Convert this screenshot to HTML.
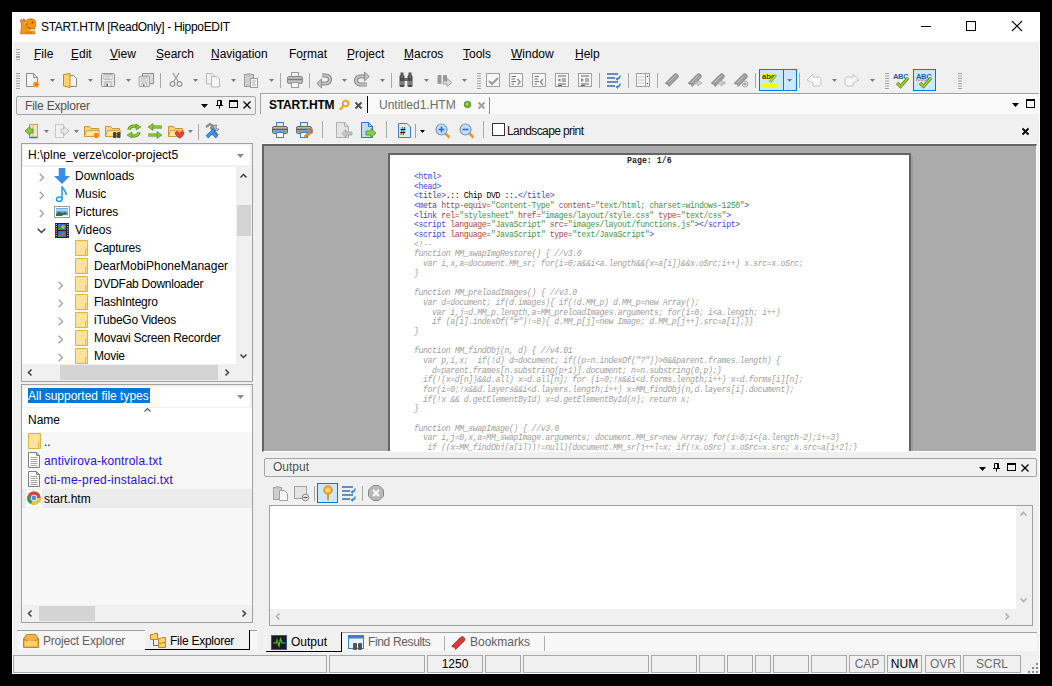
<!DOCTYPE html>
<html><head><meta charset="utf-8">
<style>
*{margin:0;padding:0;box-sizing:border-box}
html,body{width:1052px;height:686px;overflow:hidden;background:#000}
body{position:relative;font-family:"Liberation Sans",sans-serif;font-size:12px;color:#000}
.a{position:absolute}
svg{position:absolute;overflow:visible}
.t{position:absolute;white-space:nowrap;line-height:14px}
#win{left:12px;top:12px;width:1028px;height:662px;background:#f0f0f0}
#title{left:12px;top:12px;width:1028px;height:30px;background:#fff}
.bx{position:absolute;border:1px solid #a0a0a0}
.u{position:absolute;height:1px;background:#000}
.grip{position:absolute;width:4px;height:16px;background:repeating-linear-gradient(#a8a8a8 0 1px,transparent 1px 2.5px)}
.dd{position:absolute;width:0;height:0;border-left:3px solid transparent;border-right:3px solid transparent;border-top:3px solid #7a7a7a}
.sep{position:absolute;width:1px;height:15px;background:#a0a0a0}
.pre{position:absolute;font-family:"Liberation Mono",monospace;font-size:8.2px;letter-spacing:-0.39px;line-height:9.68px;white-space:pre;color:#000}
</style></head><body>
<div class="a" id="win"></div>
<div class="a" id="title"></div>
<!-- hippo icon -->
<svg style="left:20px;top:18px" width="16" height="16" viewBox="0 0 16 16">
<path d="M0.5 15.8 L1.5 8 L1 4.5 L0.3 2 L1.5 1.3 L2.5 3.3 L3.3 0.8 L4.6 1.3 L4.5 3.8 L6 2.5 C8 0.5 12 0.3 14.5 1.8 C16.2 3.3 16 7 15 9.5 C14.4 11 13.8 12 14.2 13.5 L15.2 15.8 Z" fill="#f7950f" stroke="#a8561a" stroke-width="0.6"/>
<path d="M6.5 8.5 C8.5 10.5 11.5 11.5 14.3 11" fill="none" stroke="#8a4a10" stroke-width="0.9"/>
<path d="M10 11.3 L14 11.2 L13.8 12.8 L10.5 12.6Z" fill="#fff"/>
<circle cx="5.9" cy="5.6" r="1.1" fill="#fff"/><circle cx="6.5" cy="6" r="0.7" fill="#000"/>
<ellipse cx="12.3" cy="4.5" rx="0.6" ry="0.9" fill="#5a1a00"/>
<path d="M5 14.3 C7 15.3 10 15.3 12 14.3" fill="none" stroke="#c86a10" stroke-width="0.7"/>
</svg>
<div class="t" style="left:41px;top:20px;font-size:12px;letter-spacing:-0.32px">START.HTM [ReadOnly] - HippoEDIT</div>
<!-- window controls -->
<div class="a" style="left:921px;top:26px;width:10px;height:1px;background:#000"></div>
<div class="a" style="left:966px;top:21px;width:10px;height:10px;border:1px solid #000"></div>
<svg style="left:1012px;top:21px" width="10" height="10" viewBox="0 0 10 10"><path d="M0 0L10 10M10 0L0 10" stroke="#000" stroke-width="1.1"/></svg>

<!-- menu -->
<div class="grip" style="left:16px;top:49px;height:12px"></div>
<div class="t" style="left:34px;top:47px">File</div><div class="u" style="left:34px;top:59px;width:6px"></div>
<div class="t" style="left:71px;top:47px">Edit</div><div class="u" style="left:71px;top:59px;width:7px"></div>
<div class="t" style="left:110px;top:47px">View</div><div class="u" style="left:110px;top:59px;width:8px"></div>
<div class="t" style="left:156px;top:47px">Search</div><div class="u" style="left:156px;top:59px;width:7px"></div>
<div class="t" style="left:211px;top:47px">Navigation</div><div class="u" style="left:211px;top:59px;width:8px"></div>
<div class="t" style="left:289px;top:47px">Format</div><div class="u" style="left:302px;top:59px;width:4px"></div>
<div class="t" style="left:347px;top:47px">Project</div><div class="u" style="left:347px;top:59px;width:7px"></div>
<div class="t" style="left:404px;top:47px">Macros</div><div class="u" style="left:404px;top:59px;width:9px"></div>
<div class="t" style="left:463px;top:47px">Tools</div><div class="u" style="left:463px;top:59px;width:6px"></div>
<div class="t" style="left:511px;top:47px">Window</div><div class="u" style="left:511px;top:59px;width:11px"></div>
<div class="t" style="left:575px;top:47px">Help</div><div class="u" style="left:575px;top:59px;width:8px"></div>
<svg style="left:16px;top:73px" width="4" height="16" viewBox="0 0 4 16"><rect x="0" y="0.0" width="4" height="1" fill="#a0a0a0"/><rect x="0" y="2.5" width="4" height="1" fill="#a0a0a0"/><rect x="0" y="5.0" width="4" height="1" fill="#a0a0a0"/><rect x="0" y="7.5" width="4" height="1" fill="#a0a0a0"/><rect x="0" y="10.0" width="4" height="1" fill="#a0a0a0"/><rect x="0" y="12.5" width="4" height="1" fill="#a0a0a0"/><rect x="0" y="15.0" width="4" height="1" fill="#a0a0a0"/></svg>
<svg style="left:24px;top:72px" width="16" height="16" viewBox="0 0 16 16"><path d="M2.5 1.5H9.5L13.5 5.5V14.5H2.5Z" fill="#f4f4f4" stroke="#8a8a8a"/><path d="M9.5 1.5V5.5H13.5" fill="none" stroke="#8a8a8a"/><circle cx="12" cy="12.5" r="3" fill="#f7a21b"/><circle cx="12.5" cy="12.5" r="1.3" fill="#e8581a"/></svg>
<svg style="left:50px;top:79px" width="5" height="3" viewBox="0 0 5 3"><path d="M0 0H5L2.5 3Z" fill="#7a7a7a"/></svg>
<svg style="left:62px;top:72px" width="16" height="16" viewBox="0 0 16 16"><path d="M7.5 3.5H11.5L14.5 6.5V14.5H7.5Z" fill="#f6f6f6" stroke="#8a8a8a"/><path d="M1.5 2.5L8 1.5V15.5L1.5 14Z" fill="#fdd26a" stroke="#d0861c"/></svg>
<svg style="left:88px;top:79px" width="5" height="3" viewBox="0 0 5 3"><path d="M0 0H5L2.5 3Z" fill="#7a7a7a"/></svg>
<svg style="left:100px;top:72px" width="16" height="16" viewBox="0 0 16 16"><rect x="1.5" y="1.5" width="13" height="13" rx="1" fill="#e8e8e8" stroke="#8f8f8f"/><rect x="4" y="2.5" width="8" height="5" fill="#fafafa" stroke="#9a9a9a" stroke-width="0.6"/><path d="M5 4H11M5 6H10" stroke="#8a8a8a" stroke-width="0.7"/><rect x="5" y="10" width="6" height="4.5" fill="#f8f8f8" stroke="#8a8a8a" stroke-width="0.7"/><rect x="6.5" y="11.5" width="1.5" height="2.5" fill="#555"/></svg>
<svg style="left:126px;top:79px" width="5" height="3" viewBox="0 0 5 3"><path d="M0 0H5L2.5 3Z" fill="#7a7a7a"/></svg>
<svg style="left:138px;top:72px" width="16" height="16" viewBox="0 0 16 16"><rect x="4.5" y="1.5" width="11" height="10" fill="#dcdcdc" stroke="#8f8f8f"/><g transform="translate(0,3) scale(0.8)"><rect x="1.5" y="1.5" width="13" height="13" rx="1" fill="#e8e8e8" stroke="#8f8f8f"/><rect x="4" y="2.5" width="8" height="5" fill="#fafafa" stroke="#9a9a9a" stroke-width="0.6"/><path d="M5 4H11M5 6H10" stroke="#8a8a8a" stroke-width="0.7"/><rect x="5" y="10" width="6" height="4.5" fill="#f8f8f8" stroke="#8a8a8a" stroke-width="0.7"/><rect x="6.5" y="11.5" width="1.5" height="2.5" fill="#555"/></g></svg>
<div class="a" style="left:160px;top:73px;width:1px;height:15px;background:#a9a9a9"></div>
<svg style="left:168px;top:72px" width="16" height="16" viewBox="0 0 16 16"><path d="M5 1L10.5 10M11 1L5.5 10" stroke="#9a9a9a" stroke-width="1.2"/><circle cx="4.5" cy="12" r="2.3" fill="none" stroke="#9a9a9a" stroke-width="1.3"/><circle cx="11.5" cy="12" r="2.3" fill="none" stroke="#9a9a9a" stroke-width="1.3"/></svg>
<svg style="left:193px;top:79px" width="5" height="3" viewBox="0 0 5 3"><path d="M0 0H5L2.5 3Z" fill="#7a7a7a"/></svg>
<svg style="left:205px;top:72px" width="16" height="16" viewBox="0 0 16 16"><path d="M1.5 1.5H7L9.5 4V12H1.5Z" fill="#f2f2f2" stroke="#b8b8b8"/><path d="M6.5 4.5H12L14.5 7V15H6.5Z" fill="#f6f6f6" stroke="#b8b8b8"/></svg>
<svg style="left:231px;top:79px" width="5" height="3" viewBox="0 0 5 3"><path d="M0 0H5L2.5 3Z" fill="#7a7a7a"/></svg>
<svg style="left:243px;top:72px" width="16" height="16" viewBox="0 0 16 16"><rect x="1.5" y="2.5" width="9" height="12" fill="#cfcfcf" stroke="#9a9a9a"/><rect x="4" y="1" width="4" height="3" fill="#bbb"/><rect x="7.5" y="6.5" width="7" height="9" fill="#f8f8f8" stroke="#9a9a9a"/><path d="M9 9H13M9 11H12M9 13H13" stroke="#999" stroke-width="0.8"/></svg>
<svg style="left:269px;top:79px" width="5" height="3" viewBox="0 0 5 3"><path d="M0 0H5L2.5 3Z" fill="#7a7a7a"/></svg>
<div class="a" style="left:280px;top:73px;width:1px;height:15px;background:#a9a9a9"></div>
<svg style="left:287px;top:72px" width="16" height="16" viewBox="0 0 16 16"><rect x="4.5" y="0.5" width="7" height="6" fill="#f0f0f0" stroke="#9a9a9a"/><rect x="0.5" y="4.5" width="15" height="7" rx="1.5" fill="#c0c0c0" stroke="#8a8a8a"/><path d="M1 7.5H15" stroke="#7a7a7a" stroke-width="1.4"/><rect x="4.5" y="10.5" width="7" height="5" fill="#f8f8f8" stroke="#9a9a9a"/></svg>
<div class="a" style="left:309px;top:73px;width:1px;height:15px;background:#a9a9a9"></div>
<svg style="left:316px;top:72px" width="16" height="16" viewBox="0 0 16 16"><path d="M6 3.5H10A4 4 0 0 1 10 11.5H5" fill="none" stroke="#858585" stroke-width="4.2"/><path d="M6 3.5H10A4 4 0 0 1 10 11.5H5" fill="none" stroke="#c4c4c4" stroke-width="2.2"/><path d="M0.8 11.5L5.5 7V16Z" fill="#c4c4c4" stroke="#858585" stroke-width="0.9"/></svg>
<svg style="left:342px;top:79px" width="5" height="3" viewBox="0 0 5 3"><path d="M0 0H5L2.5 3Z" fill="#7a7a7a"/></svg>
<svg style="left:354px;top:72px" width="16" height="16" viewBox="0 0 16 16"><path d="M10 4.5H6A4 4 0 0 0 6 12.5H13" fill="none" stroke="#858585" stroke-width="4.2"/><path d="M10 4.5H6A4 4 0 0 0 6 12.5H13" fill="none" stroke="#c4c4c4" stroke-width="2.2"/><path d="M15.2 4.5L10.5 0V9Z" fill="#c4c4c4" stroke="#858585" stroke-width="0.9"/></svg>
<svg style="left:380px;top:79px" width="5" height="3" viewBox="0 0 5 3"><path d="M0 0H5L2.5 3Z" fill="#7a7a7a"/></svg>
<div class="a" style="left:391px;top:73px;width:1px;height:15px;background:#a9a9a9"></div>
<svg style="left:398px;top:72px" width="16" height="16" viewBox="0 0 16 16"><rect x="1.5" y="3" width="5" height="12" rx="1.5" fill="#4a4a4a"/><rect x="9.5" y="3" width="5" height="12" rx="1.5" fill="#4a4a4a"/><rect x="2.5" y="0.5" width="3" height="3" fill="#555"/><rect x="10.5" y="0.5" width="3" height="3" fill="#555"/><rect x="6" y="6" width="4" height="3" fill="#666"/><path d="M2 10H6M10 10H14M2 12H6M10 12H14" stroke="#ccc" stroke-width="0.8"/><circle cx="4" cy="5" r="0.8" fill="#6ab0ff"/><circle cx="12" cy="5" r="0.8" fill="#6ab0ff"/></svg>
<svg style="left:424px;top:79px" width="5" height="3" viewBox="0 0 5 3"><path d="M0 0H5L2.5 3Z" fill="#7a7a7a"/></svg>
<svg style="left:437px;top:72px" width="16" height="16" viewBox="0 0 16 16"><rect x="0.5" y="3" width="4" height="9" rx="1" fill="#999"/><rect x="6" y="3" width="4" height="9" rx="1" fill="#999"/><path d="M6 9H10V6.5L15 10.5L10 14.5V12H6Z" fill="#d8d8d8" stroke="#9a9a9a" stroke-width="0.8"/></svg>
<svg style="left:462px;top:79px" width="5" height="3" viewBox="0 0 5 3"><path d="M0 0H5L2.5 3Z" fill="#7a7a7a"/></svg>
<svg style="left:477px;top:73px" width="4" height="16" viewBox="0 0 4 16"><rect x="0" y="0.0" width="4" height="1" fill="#a0a0a0"/><rect x="0" y="2.5" width="4" height="1" fill="#a0a0a0"/><rect x="0" y="5.0" width="4" height="1" fill="#a0a0a0"/><rect x="0" y="7.5" width="4" height="1" fill="#a0a0a0"/><rect x="0" y="10.0" width="4" height="1" fill="#a0a0a0"/><rect x="0" y="12.5" width="4" height="1" fill="#a0a0a0"/><rect x="0" y="15.0" width="4" height="1" fill="#a0a0a0"/></svg>
<svg style="left:485px;top:72px" width="16" height="16" viewBox="0 0 16 16"><rect x="1.5" y="1.5" width="13" height="13" fill="#f6f6f6" stroke="#a0a0a0"/><path d="M4 9L7 12L13 6" fill="none" stroke="#9a9a9a" stroke-width="2"/></svg>
<svg style="left:508px;top:72px" width="16" height="16" viewBox="0 0 16 16"><rect x="1.5" y="1.5" width="13" height="13" fill="#f6f6f6" stroke="#a0a0a0"/><path d="M3.5 4.5H8M3.5 7H7M3.5 9.5H8M3.5 12H6" stroke="#666" stroke-width="0.9"/><path d="M9.5 7L12 10L9.5 13" fill="none" stroke="#9a9a9a" stroke-width="1.6"/></svg>
<svg style="left:531px;top:72px" width="16" height="16" viewBox="0 0 16 16"><rect x="1.5" y="1.5" width="13" height="13" fill="#f6f6f6" stroke="#a0a0a0"/><path d="M3.5 4.5H8M3.5 7H7M3.5 9.5H8M3.5 12H6" stroke="#666" stroke-width="0.9"/><path d="M12 7L9.5 10L12 13" fill="none" stroke="#9a9a9a" stroke-width="1.6"/></svg>
<svg style="left:554px;top:72px" width="16" height="16" viewBox="0 0 16 16"><rect x="1.5" y="1.5" width="13" height="13" fill="#f6f6f6" stroke="#a0a0a0"/><path d="M4 4H12M8 7H12M8 9H12M4 12H12M4 13.5H8" stroke="#555" stroke-width="0.9"/><path d="M3.5 8L6.5 6V10Z" fill="#888"/></svg>
<svg style="left:577px;top:72px" width="16" height="16" viewBox="0 0 16 16"><rect x="1.5" y="1.5" width="13" height="13" fill="#f6f6f6" stroke="#a0a0a0"/><path d="M4 4H12M8 7H12M8 9H12M4 12H12M4 13.5H8" stroke="#555" stroke-width="0.9"/><path d="M7 8L4 6V10Z" fill="#888"/></svg>
<div class="a" style="left:599px;top:73px;width:1px;height:15px;background:#a9a9a9"></div>
<svg style="left:606px;top:72px" width="16" height="16" viewBox="0 0 16 16"><path d="M1 2H12M1 6H9M1 10H12M1 14H9" stroke="#3a6ea5" stroke-width="1.3"/><path d="M14 3.5C14 6 12.5 7 10.5 7M14 11.5C14 14 12.5 15 10.5 15" fill="none" stroke="#2a8ae0" stroke-width="1.5"/><path d="M9.5 7L12 5V9ZM9.5 15L12 13V17Z" fill="#2a8ae0"/></svg>
<div class="a" style="left:628px;top:73px;width:1px;height:15px;background:#a9a9a9"></div>
<svg style="left:635px;top:72px" width="16" height="16" viewBox="0 0 16 16"><rect x="1.5" y="1.5" width="13" height="13" fill="#f8f8f8" stroke="#a0a0a0"/><path d="M10.5 1.5V14.5" stroke="#a0a0a0"/><path d="M3 5H9M3 8H9M3 11H9" stroke="#c8c8c8"/><path d="M11.5 5L12.5 3.5L13.5 5ZM11.5 11L12.5 12.5L13.5 11Z" fill="#444"/></svg>
<div class="a" style="left:657px;top:73px;width:1px;height:15px;background:#a9a9a9"></div>
<svg style="left:664px;top:72px" width="16" height="16" viewBox="0 0 16 16"><path d="M1.5 11L10 2.5C11 1.5 12.5 1.5 13.5 2.5C14.5 3.5 14.5 5 13.5 6L5 14.5L4.5 12L2 12Z" fill="#9f9f9f" stroke="#7a7a7a" stroke-width="0.8"/><path d="M4 11L11.5 3.5" stroke="#c8c8c8" stroke-width="0.8"/></svg>
<svg style="left:687px;top:72px" width="16" height="16" viewBox="0 0 16 16"><path d="M1.5 11L10 2.5C11 1.5 12.5 1.5 13.5 2.5C14.5 3.5 14.5 5 13.5 6L5 14.5L4.5 12L2 12Z" fill="#9f9f9f" stroke="#7a7a7a" stroke-width="0.8"/><path d="M4 11L11.5 3.5" stroke="#c8c8c8" stroke-width="0.8"/><path d="M8 10H11V8L15 11L11 14V12H8Z" fill="#d0d0d0" stroke="#a0a0a0" stroke-width="0.6"/></svg>
<svg style="left:710px;top:72px" width="16" height="16" viewBox="0 0 16 16"><path d="M1.5 11L10 2.5C11 1.5 12.5 1.5 13.5 2.5C14.5 3.5 14.5 5 13.5 6L5 14.5L4.5 12L2 12Z" fill="#9f9f9f" stroke="#7a7a7a" stroke-width="0.8"/><path d="M4 11L11.5 3.5" stroke="#c8c8c8" stroke-width="0.8"/><path d="M15 10H12V8L8 11L12 14V12H15Z" fill="#d0d0d0" stroke="#a0a0a0" stroke-width="0.6"/></svg>
<svg style="left:733px;top:72px" width="16" height="16" viewBox="0 0 16 16"><path d="M1.5 11L10 2.5C11 1.5 12.5 1.5 13.5 2.5C14.5 3.5 14.5 5 13.5 6L5 14.5L4.5 12L2 12Z" fill="#9f9f9f" stroke="#7a7a7a" stroke-width="0.8"/><path d="M4 11L11.5 3.5" stroke="#c8c8c8" stroke-width="0.8"/><circle cx="12" cy="12" r="3" fill="#d8d8d8" stroke="#999" stroke-width="0.7"/><path d="M10.5 12H13.5" stroke="#777"/></svg>
<div class="a" style="left:755px;top:73px;width:1px;height:15px;background:#a9a9a9"></div>
<div class="a" style="left:759px;top:69px;width:38px;height:22px;background:#cce8ff;border:1px solid #0078d7"></div>
<div class="a" style="left:783px;top:69px;width:1px;height:22px;background:#0078d7"></div>
<svg style="left:762px;top:72px" width="16" height="16" viewBox="0 0 16 16"><rect x="0" y="1" width="11" height="6" fill="#ffff00"/><text x="0" y="7" font-family="Liberation Sans" font-weight="bold" font-size="7.5" fill="#333">abc</text><path d="M8 10L14 3" stroke="#5a8a10" stroke-width="2.6"/><path d="M8 10L14 3" stroke="#b8e040" stroke-width="1.3"/><rect x="0" y="12" width="16" height="4" fill="#ffff00"/></svg>
<svg style="left:787px;top:79px" width="5" height="3" viewBox="0 0 5 3"><path d="M0 0H5L2.5 3Z" fill="#7a7a7a"/></svg>
<div class="a" style="left:799px;top:73px;width:1px;height:15px;background:#a9a9a9"></div>
<svg style="left:806px;top:72px" width="16" height="16" viewBox="0 0 16 16"><path d="M1 8L7 2V5H12C14 5 15 6 15 8V11C15 13 14 14 12 14H7V11Z" fill="#f6f6f6" stroke="#c2c2c2"/></svg>
<svg style="left:832px;top:79px" width="5" height="3" viewBox="0 0 5 3"><path d="M0 0H5L2.5 3Z" fill="#7a7a7a"/></svg>
<svg style="left:844px;top:72px" width="16" height="16" viewBox="0 0 16 16"><path d="M15 8L9 2V5H4C2 5 1 6 1 8V11C1 13 2 14 4 14H9V11Z" fill="#f6f6f6" stroke="#c2c2c2"/></svg>
<svg style="left:870px;top:79px" width="5" height="3" viewBox="0 0 5 3"><path d="M0 0H5L2.5 3Z" fill="#7a7a7a"/></svg>
<svg style="left:885px;top:73px" width="4" height="16" viewBox="0 0 4 16"><rect x="0" y="0.0" width="4" height="1" fill="#a0a0a0"/><rect x="0" y="2.5" width="4" height="1" fill="#a0a0a0"/><rect x="0" y="5.0" width="4" height="1" fill="#a0a0a0"/><rect x="0" y="7.5" width="4" height="1" fill="#a0a0a0"/><rect x="0" y="10.0" width="4" height="1" fill="#a0a0a0"/><rect x="0" y="12.5" width="4" height="1" fill="#a0a0a0"/><rect x="0" y="15.0" width="4" height="1" fill="#a0a0a0"/></svg>
<svg style="left:893px;top:72px" width="16" height="16" viewBox="0 0 16 16"><text x="0" y="7" font-family="Liberation Sans" font-weight="bold" font-size="7.5" fill="#2060a8" letter-spacing="-0.3">ABC</text><path d="M4 11L7.5 14.5L15 6" fill="none" stroke="#5a8a10" stroke-width="3.2"/><path d="M4 11L7.5 14.5L15 6" fill="none" stroke="#9ed02a" stroke-width="1.8"/></svg>
<div class="a" style="left:913px;top:69px;width:23px;height:22px;background:#cce8ff;border:1px solid #0078d7"></div>
<svg style="left:916px;top:72px" width="16" height="16" viewBox="0 0 16 16"><text x="0" y="7" font-family="Liberation Sans" font-weight="bold" font-size="7.5" fill="#2060a8" letter-spacing="-0.3">ABC</text><path d="M0 8.5L1.5 7.7L3 8.5L4.5 7.7L6 8.5L7.5 7.7L9 8.5L10.5 7.7L12 8.5" fill="none" stroke="#e02020" stroke-width="0.6"/><path d="M4 11L7.5 14.5L15 6" fill="none" stroke="#5a8a10" stroke-width="3.2"/><path d="M4 11L7.5 14.5L15 6" fill="none" stroke="#9ed02a" stroke-width="1.8"/></svg>
<svg style="left:958px;top:73px" width="4" height="16" viewBox="0 0 4 16"><rect x="0" y="0.0" width="4" height="1" fill="#a0a0a0"/><rect x="0" y="2.5" width="4" height="1" fill="#a0a0a0"/><rect x="0" y="5.0" width="4" height="1" fill="#a0a0a0"/><rect x="0" y="7.5" width="4" height="1" fill="#a0a0a0"/><rect x="0" y="10.0" width="4" height="1" fill="#a0a0a0"/><rect x="0" y="12.5" width="4" height="1" fill="#a0a0a0"/><rect x="0" y="15.0" width="4" height="1" fill="#a0a0a0"/></svg>
<div class="a" style="left:16px;top:96px;width:240px;height:19px;border:1px solid #a5a5a5;border-radius:2px"></div>
<div class="t" style="left:25px;top:99px;color:#505050;letter-spacing:-0.2px">File Explorer</div>
<svg style="left:201px;top:104px" width="7" height="4" viewBox="0 0 7 4"><path d="M0 0H7L3.5 4Z" fill="#000"/></svg>
<svg style="left:215px;top:100px" width="9" height="9" viewBox="0 0 9 9"><path d="M2.5 0.5H6.5V5.5H2.5Z" fill="none" stroke="#000"/><path d="M1 5.5H8M4.5 5.5V8.5M5.5 0.5V5" stroke="#000"/></svg>
<div class="a" style="left:229px;top:100px;width:9px;height:8px;border:1px solid #000;border-top-width:2px"></div>
<svg style="left:243px;top:101px" width="8" height="8" viewBox="0 0 8 8"><path d="M0.5 0.5L7.5 7.5M7.5 0.5L0.5 7.5" stroke="#000" stroke-width="1.3"/></svg>
<svg style="left:24px;top:123px" width="16" height="16" viewBox="0 0 16 16"><rect x="5.5" y="1.5" width="8" height="13" fill="#f2e3c4" stroke="#c8a060"/><path d="M9 1.5V14.5" stroke="#d8b880"/><path d="M5.5 14.5H13.5" stroke="#2a7ad0" stroke-width="1.5"/><path d="M1 8L6 3.5V6H9V10H6V12.5Z" fill="#8cc63f" stroke="#4a8a10" stroke-width="0.7"/></svg>
<svg style="left:44px;top:130px" width="5" height="3" viewBox="0 0 5 3"><path d="M0 0H5L2.5 3Z" fill="#7a7a7a"/></svg>
<svg style="left:54px;top:123px" width="16" height="16" viewBox="0 0 16 16"><rect x="1.5" y="1.5" width="8" height="13" fill="#f2f2f2" stroke="#c8c8c8"/><path d="M15 8L10 3.5V6H7V10H10V12.5Z" fill="#e8e8e8" stroke="#b0b0b0" stroke-width="0.7"/></svg>
<svg style="left:74px;top:130px" width="5" height="3" viewBox="0 0 5 3"><path d="M0 0H5L2.5 3Z" fill="#7a7a7a"/></svg>
<svg style="left:84px;top:123px" width="16" height="16" viewBox="0 0 16 16"><path d="M0.5 3.5V13.5H14.5V5.5H7L5.5 3.5Z" fill="#f6d77c" stroke="#d39030"/><path d="M0.5 13.5L2.5 7.5H15.5L14.5 13.5Z" fill="#fbe6a0" stroke="#d39030" stroke-width="0.8"/><circle cx="12.5" cy="12.5" r="2.8" fill="#f58a1f"/></svg>
<svg style="left:105px;top:123px" width="16" height="16" viewBox="0 0 16 16"><path d="M0.5 3.5V13.5H14.5V5.5H7L5.5 3.5Z" fill="#f6d77c" stroke="#d39030"/><path d="M0.5 13.5L2.5 7.5H15.5L14.5 13.5Z" fill="#fbe6a0" stroke="#d39030" stroke-width="0.8"/><rect x="8" y="9" width="3.5" height="6" rx="1" fill="#444"/><rect x="12" y="9" width="3.5" height="6" rx="1" fill="#444"/></svg>
<svg style="left:126px;top:123px" width="16" height="16" viewBox="0 0 16 16"><path d="M3 7C3 3 9 2 12 4" fill="none" stroke="#4a8a10" stroke-width="3"/><path d="M3 7C3 3 9 2 12 4" fill="none" stroke="#9ed02a" stroke-width="1.6"/><path d="M10 1L15 4L10 7Z" fill="#8cc63f" stroke="#4a8a10" stroke-width="0.6"/><path d="M13 9C13 13 7 14 4 12" fill="none" stroke="#4a8a10" stroke-width="3"/><path d="M13 9C13 13 7 14 4 12" fill="none" stroke="#9ed02a" stroke-width="1.6"/><path d="M6 9L1 12L6 15Z" fill="#8cc63f" stroke="#4a8a10" stroke-width="0.6"/></svg>
<svg style="left:147px;top:123px" width="16" height="16" viewBox="0 0 16 16"><path d="M5 4H15" stroke="#4a8a10" stroke-width="3"/><path d="M5 4H15" stroke="#9ed02a" stroke-width="1.6"/><path d="M6 0.5L1 4L6 7.5Z" fill="#8cc63f" stroke="#4a8a10" stroke-width="0.6"/><path d="M1 12H11" stroke="#4a8a10" stroke-width="3"/><path d="M1 12H11" stroke="#9ed02a" stroke-width="1.6"/><path d="M10 8.5L15 12L10 15.5Z" fill="#8cc63f" stroke="#4a8a10" stroke-width="0.6"/></svg>
<svg style="left:168px;top:123px" width="16" height="16" viewBox="0 0 16 16"><path d="M0.5 3.5V13.5H14.5V5.5H7L5.5 3.5Z" fill="#f6d77c" stroke="#d39030"/><path d="M0.5 13.5L2.5 7.5H15.5L14.5 13.5Z" fill="#fbe6a0" stroke="#d39030" stroke-width="0.8"/><path d="M11.5 15.5L7.5 11.5C6.5 10.5 7 8.5 9 8.5C10.2 8.5 11 9.3 11.5 10C12 9.3 12.8 8.5 14 8.5C16 8.5 16.5 10.5 15.5 11.5Z" fill="#e8403a" stroke="#b02020" stroke-width="0.6"/></svg>
<svg style="left:188px;top:130px" width="5" height="3" viewBox="0 0 5 3"><path d="M0 0H5L2.5 3Z" fill="#7a7a7a"/></svg>
<div class="a" style="left:198px;top:124px;width:1px;height:16px;background:#a9a9a9"></div>
<svg style="left:204px;top:123px" width="16" height="16" viewBox="0 0 16 16"><path d="M2 4L6 1L9 3L7 5L14 12" fill="none" stroke="#8a8a8a" stroke-width="2.2"/><path d="M13 2A3 3 0 1 0 15 6L13 6L12 4Z" fill="#c8c8c8" stroke="#7a7a7a" stroke-width="0.8"/><path d="M3 14L11 6" stroke="#1a5fb4" stroke-width="3.4"/><path d="M3 14L11 6" stroke="#4a9af0" stroke-width="2"/><path d="M13 14L9 10" stroke="#1a5fb4" stroke-width="3.4"/><path d="M13 14L9 10" stroke="#4a9af0" stroke-width="2"/></svg>
<div class="a" style="left:21px;top:143px;width:232px;height:239px;border:1px solid #a0a0a0;background:#fff"></div>
<div class="a" style="left:22px;top:144px;width:230px;height:23px;background:#f0f0f0"></div>
<div class="a" style="left:23px;top:145px;width:227px;height:20px;background:#fff"></div>
<div class="t" style="left:28px;top:148px;">H:\plne_verze\color-project5</div>
<svg style="left:237px;top:154px" width="7" height="4" viewBox="0 0 7 4"><path d="M0 0H7L3.5 4Z" fill="#8a8a8a"/></svg>
<div class="a" style="left:236px;top:167px;width:16px;height:214px;background:#f0f0f0"></div>
<div class="a" style="left:22px;top:364px;width:214px;height:17px;background:#f0f0f0"></div>
<div class="a" style="left:237px;top:205px;width:14px;height:31px;background:#d4d4d4"></div>
<div class="a" style="left:60px;top:365px;width:158px;height:15px;background:#d4d4d4"></div>
<svg style="left:240px;top:174px" width="7" height="4" viewBox="0 0 7 4"><path d="M0.5 3.5L3.5 0.5L6.5 3.5" fill="none" stroke="#404040" stroke-width="1.5"/></svg>
<svg style="left:240px;top:354px" width="7" height="4" viewBox="0 0 7 4"><path d="M0.5 0.5L3.5 3.5L6.5 0.5" fill="none" stroke="#404040" stroke-width="1.5"/></svg>
<svg style="left:28px;top:369px" width="4" height="7" viewBox="0 0 4 7"><path d="M3.5 0.5L0.5 3.5L3.5 6.5" fill="none" stroke="#404040" stroke-width="1.5"/></svg>
<svg style="left:225px;top:369px" width="4" height="7" viewBox="0 0 4 7"><path d="M0.5 0.5L3.5 3.5L0.5 6.5" fill="none" stroke="#404040" stroke-width="1.5"/></svg>
<svg style="left:39px;top:173px" width="6" height="9" viewBox="0 0 6 9"><path d="M0.7 0.7L4.5 4.5L0.7 8.3" fill="none" stroke="#a0a0a0" stroke-width="1.3"/></svg>
<svg style="left:54px;top:168px" width="16" height="16" viewBox="0 0 16 16"><path d="M4.7 0H11.3V8H16L8 16L0 8H4.7Z" fill="#3a8ee6"/></svg>
<div class="t" style="left:75px;top:169px;">Downloads</div>
<svg style="left:39px;top:191px" width="6" height="9" viewBox="0 0 6 9"><path d="M0.7 0.7L4.5 4.5L0.7 8.3" fill="none" stroke="#a0a0a0" stroke-width="1.3"/></svg>
<svg style="left:56px;top:186px" width="12" height="16" viewBox="0 0 12 16"><path d="M6 0.5V13" stroke="#1a9af0" stroke-width="1.5"/><ellipse cx="3.3" cy="13.2" rx="2.8" ry="2.2" fill="none" stroke="#1a9af0" stroke-width="1.5"/><path d="M6 0.5C6.5 3 10.5 4.5 10.2 9" fill="none" stroke="#1a9af0" stroke-width="1.5"/></svg>
<div class="t" style="left:75px;top:187px;">Music</div>
<svg style="left:39px;top:209px" width="6" height="9" viewBox="0 0 6 9"><path d="M0.7 0.7L4.5 4.5L0.7 8.3" fill="none" stroke="#a0a0a0" stroke-width="1.3"/></svg>
<svg style="left:54px;top:206px" width="16" height="12" viewBox="0 0 16 12"><rect x="0.5" y="0.5" width="15" height="11" fill="#fff" stroke="#9a9a9a"/><rect x="2" y="2" width="12" height="8" fill="#6ab0e8"/><path d="M2 3H14V5H2Z" fill="#a8d4f4"/><path d="M2 8L5 5.5L8 7L11 6L14 8V10H2Z" fill="#3a6a48"/><path d="M9 9L14 8.5V10H8Z" fill="#dfe8f0"/></svg>
<div class="t" style="left:75px;top:205px;">Pictures</div>
<svg style="left:37px;top:228px" width="9" height="6" viewBox="0 0 9 6"><path d="M0.7 0.7L4.5 4.5L8.3 0.7" fill="none" stroke="#404040" stroke-width="1.4"/></svg>
<svg style="left:55px;top:223px" width="14" height="15" viewBox="0 0 14 15"><rect x="0" y="0" width="14" height="15" fill="#222"/><rect x="3" y="1" width="8" height="6" fill="#3a70c8"/><rect x="3" y="8" width="8" height="6" fill="#3a70c8"/><circle cx="8" cy="4" r="1.8" fill="#e8b020"/><rect x="3" y="5" width="3" height="2" fill="#40a040"/><circle cx="8" cy="11" r="1.8" fill="#e05a20"/><rect x="3" y="12" width="3" height="2" fill="#40a040"/><path d="M1.2 1V14.5M12.8 1V14.5" stroke="#eee" stroke-width="1" stroke-dasharray="1 1.2"/></svg>
<div class="t" style="left:75px;top:223px;">Videos</div>
<svg style="left:75px;top:240px" width="13" height="16" viewBox="0 0 13 16"><path d="M0.5 0.5H12.5V15.5H0.5Z" fill="#fce29a" stroke="#e0b440"/><path d="M10.5 9.5V15.5H12.5V8.5Z" fill="#fcd77a" stroke="#e0b440" stroke-width="0.8"/></svg>
<div class="t" style="left:94px;top:241px;letter-spacing:-0.25px">Captures</div>
<svg style="left:75px;top:258px" width="13" height="16" viewBox="0 0 13 16"><path d="M0.5 0.5H12.5V15.5H0.5Z" fill="#fce29a" stroke="#e0b440"/><path d="M10.5 9.5V15.5H12.5V8.5Z" fill="#fcd77a" stroke="#e0b440" stroke-width="0.8"/></svg>
<div class="t" style="left:94px;top:259px;">DearMobiPhoneManager</div>
<svg style="left:58px;top:281px" width="6" height="9" viewBox="0 0 6 9"><path d="M0.7 0.7L4.5 4.5L0.7 8.3" fill="none" stroke="#a0a0a0" stroke-width="1.3"/></svg>
<svg style="left:75px;top:276px" width="13" height="16" viewBox="0 0 13 16"><path d="M0.5 0.5H12.5V15.5H0.5Z" fill="#fce29a" stroke="#e0b440"/><path d="M10.5 9.5V15.5H12.5V8.5Z" fill="#fcd77a" stroke="#e0b440" stroke-width="0.8"/></svg>
<div class="t" style="left:94px;top:277px;letter-spacing:-0.25px">DVDFab Downloader</div>
<svg style="left:58px;top:299px" width="6" height="9" viewBox="0 0 6 9"><path d="M0.7 0.7L4.5 4.5L0.7 8.3" fill="none" stroke="#a0a0a0" stroke-width="1.3"/></svg>
<svg style="left:75px;top:294px" width="13" height="16" viewBox="0 0 13 16"><path d="M0.5 0.5H12.5V15.5H0.5Z" fill="#fce29a" stroke="#e0b440"/><path d="M10.5 9.5V15.5H12.5V8.5Z" fill="#fcd77a" stroke="#e0b440" stroke-width="0.8"/></svg>
<div class="t" style="left:94px;top:295px;letter-spacing:-0.25px">FlashIntegro</div>
<svg style="left:58px;top:317px" width="6" height="9" viewBox="0 0 6 9"><path d="M0.7 0.7L4.5 4.5L0.7 8.3" fill="none" stroke="#a0a0a0" stroke-width="1.3"/></svg>
<svg style="left:75px;top:312px" width="13" height="16" viewBox="0 0 13 16"><path d="M0.5 0.5H12.5V15.5H0.5Z" fill="#fce29a" stroke="#e0b440"/><path d="M10.5 9.5V15.5H12.5V8.5Z" fill="#fcd77a" stroke="#e0b440" stroke-width="0.8"/></svg>
<div class="t" style="left:94px;top:313px;letter-spacing:-0.25px">iTubeGo Videos</div>
<svg style="left:58px;top:335px" width="6" height="9" viewBox="0 0 6 9"><path d="M0.7 0.7L4.5 4.5L0.7 8.3" fill="none" stroke="#a0a0a0" stroke-width="1.3"/></svg>
<svg style="left:75px;top:330px" width="13" height="16" viewBox="0 0 13 16"><path d="M0.5 0.5H12.5V15.5H0.5Z" fill="#fce29a" stroke="#e0b440"/><path d="M10.5 9.5V15.5H12.5V8.5Z" fill="#fcd77a" stroke="#e0b440" stroke-width="0.8"/></svg>
<div class="t" style="left:94px;top:331px;letter-spacing:-0.25px">Movavi Screen Recorder</div>
<svg style="left:58px;top:353px" width="6" height="9" viewBox="0 0 6 9"><path d="M0.7 0.7L4.5 4.5L0.7 8.3" fill="none" stroke="#a0a0a0" stroke-width="1.3"/></svg>
<svg style="left:75px;top:348px" width="13" height="16" viewBox="0 0 13 16"><path d="M0.5 0.5H12.5V15.5H0.5Z" fill="#fce29a" stroke="#e0b440"/><path d="M10.5 9.5V15.5H12.5V8.5Z" fill="#fcd77a" stroke="#e0b440" stroke-width="0.8"/></svg>
<div class="t" style="left:94px;top:349px;letter-spacing:-0.25px">Movie</div>
<div class="a" style="left:22px;top:364px;width:214px;height:17px;background:#f0f0f0"></div>
<div class="a" style="left:60px;top:365px;width:158px;height:15px;background:#d4d4d4"></div>
<svg style="left:28px;top:369px" width="4" height="7" viewBox="0 0 4 7"><path d="M3.5 0.5L0.5 3.5L3.5 6.5" fill="none" stroke="#404040" stroke-width="1.5"/></svg>
<svg style="left:225px;top:369px" width="4" height="7" viewBox="0 0 4 7"><path d="M0.5 0.5L3.5 3.5L0.5 6.5" fill="none" stroke="#404040" stroke-width="1.5"/></svg>
<div class="a" style="left:21px;top:384px;width:232px;height:239px;border:1px solid #a0a0a0;background:#f7f7f7"></div>
<div class="a" style="left:22px;top:385px;width:230px;height:23px;background:#f0f0f0"></div>
<div class="a" style="left:23px;top:387px;width:227px;height:20px;background:#fff"></div>
<div class="a" style="left:22px;top:408px;width:230px;height:24px;background:#fff"></div>
<div class="a" style="left:28px;top:388px;width:122px;height:15px;background:#0078d7"></div>
<div class="t" style="left:28px;top:389px;color:#fff">All supported file types</div>
<svg style="left:237px;top:395px" width="7" height="4" viewBox="0 0 7 4"><path d="M0 0H7L3.5 4Z" fill="#8a8a8a"/></svg>
<svg style="left:144px;top:408px" width="7" height="4" viewBox="0 0 7 4"><path d="M0.5 3.5L3.5 0.5L6.5 3.5" fill="none" stroke="#555" stroke-width="1.1"/></svg>
<div class="t" style="left:28px;top:413px;">Name</div>
<div class="a" style="left:22px;top:489px;width:230px;height:19px;background:#ececec"></div>
<div class="a" style="left:26px;top:490px;width:16px;height:17px;background:#fff"></div>
<svg style="left:28px;top:433px" width="13" height="16" viewBox="0 0 13 16"><path d="M0.5 0.5H12.5V15.5H0.5Z" fill="#fce29a" stroke="#e0b440"/><path d="M10.5 9.5V15.5H12.5V8.5Z" fill="#fcd77a" stroke="#e0b440" stroke-width="0.8"/></svg>
<div class="t" style="left:44px;top:435px;">..</div>
<svg style="left:28px;top:452px" width="12" height="16" viewBox="0 0 12 16"><path d="M0.5 0.5H8.5L11.5 3.5V15.5H0.5Z" fill="#fff" stroke="#808080"/><path d="M8.5 0.5V3.5H11.5" fill="none" stroke="#808080"/><path d="M2.5 5.5H9.5M2.5 7.5H9.5M2.5 9.5H9.5M2.5 11.5H9.5M2.5 13.5H9.5" stroke="#909090" stroke-width="0.8"/></svg>
<div class="t" style="left:44px;top:454px;color:#2a10e0;letter-spacing:0.17px">antivirova-kontrola.txt</div>
<svg style="left:28px;top:471px" width="12" height="16" viewBox="0 0 12 16"><path d="M0.5 0.5H8.5L11.5 3.5V15.5H0.5Z" fill="#fff" stroke="#808080"/><path d="M8.5 0.5V3.5H11.5" fill="none" stroke="#808080"/><path d="M2.5 5.5H9.5M2.5 7.5H9.5M2.5 9.5H9.5M2.5 11.5H9.5M2.5 13.5H9.5" stroke="#909090" stroke-width="0.8"/></svg>
<div class="t" style="left:44px;top:473px;color:#2a10e0;letter-spacing:0.2px">cti-me-pred-instalaci.txt</div>
<svg style="left:27px;top:491px" width="14" height="14" viewBox="0 0 14 14"><circle cx="7" cy="7" r="6.8" fill="#db4437"/><path d="M7 7L13.8 7A6.8 6.8 0 0 1 3.6 12.9Z" fill="#e8c53a"/><path d="M7 7L3.6 12.9A6.8 6.8 0 0 1 0.5 5Z" fill="#3a9a5a"/><circle cx="7" cy="7" r="3.2" fill="#fff"/><circle cx="7" cy="7" r="2.4" fill="#4a8af4"/></svg>
<div class="t" style="left:44px;top:492px;">start.htm</div>
<div class="a" style="left:22px;top:605px;width:230px;height:17px;background:#f0f0f0"></div>
<div class="a" style="left:39px;top:606px;width:56px;height:15px;background:#d4d4d4"></div>
<svg style="left:28px;top:610px" width="4" height="7" viewBox="0 0 4 7"><path d="M3.5 0.5L0.5 3.5L3.5 6.5" fill="none" stroke="#404040" stroke-width="1.5"/></svg>
<svg style="left:242px;top:610px" width="4" height="7" viewBox="0 0 4 7"><path d="M0.5 0.5L3.5 3.5L0.5 6.5" fill="none" stroke="#404040" stroke-width="1.5"/></svg>
<div class="a" style="left:17px;top:630px;width:128px;height:1px;background:#a0a0a0"></div>
<div class="a" style="left:250px;top:630px;width:7px;height:1px;background:#a0a0a0"></div>
<div class="a" style="left:17px;top:631px;width:240px;height:19px;background:#f7f7f7"></div>
<div class="a" style="left:145px;top:630px;width:105px;height:20px;background:#f0f0f0;border-right:1px solid #000;border-bottom:1px solid #000"></div>
<svg style="left:23px;top:634px" width="16" height="14" viewBox="0 0 16 14"><path d="M0.5 5L3.5 0.5H12.5L15.5 5V13.5H0.5Z" fill="#f5b040" stroke="#d08020"/><path d="M0.5 5L8 9L15.5 5" fill="none" stroke="#c07010" stroke-width="0.8"/><rect x="2" y="7" width="12" height="5" fill="#fcd36a"/></svg>
<div class="t" style="left:43px;top:634px;color:#606060;letter-spacing:-0.2px">Project Explorer</div>
<svg style="left:150px;top:633px" width="16" height="15" viewBox="0 0 16 15"><path d="M0.5 1.5H3L4 0.5H7.5V6.5H0.5Z" fill="#fbd36a" stroke="#d08020"/><path d="M8.5 5.5H11L12 4.5H15.5V10.5H8.5Z" fill="#fbd36a" stroke="#d08020"/><path d="M8.5 10.5H11L12 9.5H15.5V14.5H8.5Z" fill="#fbd36a" stroke="#d08020"/><path d="M3.5 7V12.5H8" fill="none" stroke="#666"/></svg>
<div class="t" style="left:170px;top:634px;letter-spacing:-0.25px">File Explorer</div>
<div class="a" style="left:260px;top:93px;width:780px;height:1px;background:#a0a0a0"></div>
<div class="a" style="left:260px;top:93px;width:1px;height:21px;background:#a0a0a0"></div>
<div class="a" style="left:261px;top:94px;width:779px;height:20px;background:#f9f9f9;border-top:1px solid #fff"></div>
<div class="a" style="left:261px;top:95px;width:106px;height:19px;background:#f2f2f2"></div>
<div class="t" style="left:269px;top:98px;font-weight:bold;letter-spacing:-0.2px">START.HTM</div>
<svg style="left:339px;top:100px" width="10" height="10" viewBox="0 0 10 10"><circle cx="6.5" cy="3.5" r="2.8" fill="none" stroke="#e8a020" stroke-width="1.8"/><path d="M4.5 5.5L0.5 9.5M1.5 8.5L2.8 9.8M3 7L4.2 8.2" stroke="#e8a020" stroke-width="1.6"/></svg>
<svg style="left:355px;top:102px" width="7" height="7" viewBox="0 0 7 7"><path d="M0.5 0.5L6.5 6.5M6.5 0.5L0.5 6.5" stroke="#505050" stroke-width="2"/></svg>
<div class="a" style="left:367px;top:96px;width:1px;height:17px;background:#000"></div>
<div class="t" style="left:379px;top:98px;color:#6d6d6d">Untitled1.HTM</div>
<svg style="left:464px;top:101px" width="7" height="7" viewBox="0 0 7 7"><circle cx="3.5" cy="3.5" r="3.3" fill="#6cb820" stroke="#3a7a10" stroke-width="0.6"/><circle cx="3" cy="3" r="1.2" fill="#b0e060"/></svg>
<svg style="left:478px;top:102px" width="7" height="7" viewBox="0 0 7 7"><path d="M0.5 0.5L6.5 6.5M6.5 0.5L0.5 6.5" stroke="#a0a0a0" stroke-width="2"/></svg>
<div class="a" style="left:489px;top:97px;width:1px;height:17px;background:#8a8a8a"></div>
<svg style="left:1012px;top:103px" width="7" height="4" viewBox="0 0 7 4"><path d="M0 0H7L3.5 4Z" fill="#000"/></svg>
<div class="a" style="left:1026px;top:99px;width:9px;height:9px;border:1px solid #000;border-top-width:2px"></div>
<svg style="left:272px;top:122px" width="16" height="16" viewBox="0 0 16 16"><rect x="4.5" y="0.5" width="7" height="6" fill="#d8ecfa" stroke="#3a80c8"/><rect x="0.5" y="4.5" width="15" height="7" rx="1.5" fill="#b4b4b4" stroke="#6a6a6a"/><path d="M1 7.5H15" stroke="#555" stroke-width="1.4"/><path d="M1 9.5H15" stroke="#8a8a8a" stroke-width="0.8"/><rect x="4.5" y="10.5" width="7" height="5" fill="#fff" stroke="#3a80c8"/></svg>
<svg style="left:296px;top:122px" width="16" height="16" viewBox="0 0 16 16"><rect x="4.5" y="0.5" width="7" height="6" fill="#d8ecfa" stroke="#3a80c8"/><rect x="0.5" y="4.5" width="15" height="7" rx="1.5" fill="#b4b4b4" stroke="#6a6a6a"/><path d="M1 7.5H15" stroke="#555" stroke-width="1.4"/><path d="M1 9.5H15" stroke="#8a8a8a" stroke-width="0.8"/><rect x="4.5" y="10.5" width="7" height="5" fill="#fff" stroke="#3a80c8"/><path d="M9 15L14 10" stroke="#c06010" stroke-width="3"/><path d="M9 15L14 10" stroke="#f0902a" stroke-width="1.8"/><circle cx="14" cy="9" r="2.5" fill="none" stroke="#909090" stroke-width="1.4"/></svg>
<div class="a" style="left:322px;top:121px;width:1px;height:17px;background:#a9a9a9"></div>
<svg style="left:336px;top:122px" width="16" height="16" viewBox="0 0 16 16"><path d="M0.5 0.5H8.5L12.5 4.5V15.5H0.5Z" fill="#e4e4e4" stroke="#b0b0b0"/><path d="M8.5 0.5V4.5H12.5" fill="none" stroke="#b0b0b0"/><path d="M6 11.5L10 7.5V10H16V13H10V15.5Z" fill="#c8c8c8" stroke="#9a9a9a" stroke-width="0.7"/></svg>
<svg style="left:360px;top:122px" width="16" height="16" viewBox="0 0 16 16"><path d="M1.5 0.5H8.5L12.5 4.5V15.5H1.5Z" fill="#bcdcf4" stroke="#2a78c8"/><path d="M8.5 0.5V4.5H12.5" fill="none" stroke="#2a78c8"/><path d="M16 11L11 6.5V9H6V13H11V15.5Z" fill="#8cd03a" stroke="#4a9010" stroke-width="0.8"/></svg>
<div class="a" style="left:386px;top:121px;width:1px;height:17px;background:#a9a9a9"></div>
<svg style="left:397px;top:123px" width="15" height="15" viewBox="0 0 15 15"><path d="M1.5 0.5H10L13.5 4V14.5H1.5Z" fill="#d8ecfa" stroke="#3a80c8"/><text x="3" y="11.5" font-family="Liberation Sans" font-weight="bold" font-size="10" fill="#111">#</text></svg>
<div class="a" style="left:415px;top:124px;width:1px;height:14px;background:#a0a0a0"></div>
<svg style="left:420px;top:130px" width="5" height="3" viewBox="0 0 5 3"><path d="M0 0H5L2.5 3Z" fill="#000"/></svg>
<svg style="left:435px;top:123px" width="16" height="16" viewBox="0 0 16 16"><circle cx="6.5" cy="6.5" r="5.5" fill="#bfe0fa" stroke="#7a9ab8" stroke-width="1.2"/><path d="M10.5 10.5L14.5 14.5" stroke="#e09a30" stroke-width="2.6"/><path d="M3.5 6.5H9.5M6.5 3.5V9.5" stroke="#2a6ac0" stroke-width="1.5"/></svg>
<svg style="left:459px;top:123px" width="16" height="16" viewBox="0 0 16 16"><circle cx="6.5" cy="6.5" r="5.5" fill="#bfe0fa" stroke="#7a9ab8" stroke-width="1.2"/><path d="M10.5 10.5L14.5 14.5" stroke="#e09a30" stroke-width="2.6"/><path d="M3.5 6.5H9.5" stroke="#2a6ac0" stroke-width="1.5"/></svg>
<div class="a" style="left:483px;top:121px;width:1px;height:17px;background:#a9a9a9"></div>
<div class="a" style="left:492px;top:123px;width:13px;height:13px;background:#fff;border:1px solid #333"></div>
<div class="t" style="left:507px;top:124px;color:#111;letter-spacing:-0.6px">Landscape print</div>
<svg style="left:1022px;top:128px" width="7" height="7" viewBox="0 0 7 7"><path d="M0.5 0.5L6.5 6.5M6.5 0.5L0.5 6.5" stroke="#000" stroke-width="1.8"/></svg>
<div class="a" style="left:262px;top:143px;width:775px;height:1px;background:#f8f8f8"></div>
<div class="a" style="left:262px;top:144px;width:775px;height:308px;background:#ababab;border-top:2px solid #646464;border-left:2px solid #646464;border-right:1px solid #fff;border-bottom:1px solid #fff"></div>
<div class="a" style="left:911px;top:156px;width:2px;height:295px;background:#9c9c9c"></div>
<div class="a" style="left:388px;top:153px;width:523px;height:298px;background:#fff;border:2px solid #646464;border-bottom:none"></div>
<div class="a" style="left:390px;top:155px;width:519px;height:296px;overflow:hidden">
<div class="pre" style="left:237px;top:1px;font-weight:bold;font-size:8.2px;letter-spacing:0.05px;line-height:10px;color:#222">Page: 1/6</div>
<div class="pre" style="left:24px;top:16.9px"><span style="color:#4646dc">&lt;html&gt;</span>
<span style="color:#4646dc">&lt;head&gt;</span>
<span style="color:#4646dc">&lt;title&gt;</span><span style="color:#000">.:: Chip DVD ::.</span><span style="color:#4646dc">&lt;/title&gt;</span>
<span style="color:#4646dc">&lt;meta </span><span style="color:#ac4646">http-equiv=</span><span style="color:#46964a">&quot;Content-Type&quot;</span><span style="color:#ac4646"> content=</span><span style="color:#46964a">&quot;text/html; charset=windows-1250&quot;</span><span style="color:#4646dc">&gt;</span>
<span style="color:#4646dc">&lt;link </span><span style="color:#ac4646">rel=</span><span style="color:#46964a">&quot;stylesheet&quot;</span><span style="color:#ac4646"> href=</span><span style="color:#46964a">&quot;images/layout/style.css&quot;</span><span style="color:#ac4646"> type=</span><span style="color:#46964a">&quot;text/css&quot;</span><span style="color:#4646dc">&gt;</span>
<span style="color:#4646dc">&lt;script </span><span style="color:#ac4646">language=</span><span style="color:#46964a">&quot;JavaScript&quot;</span><span style="color:#ac4646"> src=</span><span style="color:#46964a">&quot;images/layout/functions.js&quot;</span><span style="color:#4646dc">&gt;&lt;/script&gt;</span>
<span style="color:#4646dc">&lt;script </span><span style="color:#ac4646">language=</span><span style="color:#46964a">&quot;JavaScript&quot;</span><span style="color:#ac4646"> type=</span><span style="color:#46964a">&quot;text/JavaScript&quot;</span><span style="color:#4646dc">&gt;</span>
<span style="color:#a0a0a0;font-style:italic">&lt;!--</span>
<span style="color:#a0a0a0;font-style:italic">function MM_swapImgRestore() { //v3.0</span>
<span style="color:#a0a0a0;font-style:italic">  var i,x,a=document.MM_sr; for(i=0;a&amp;&amp;i&lt;a.length&amp;&amp;(x=a[i])&amp;&amp;x.oSrc;i++) x.src=x.oSrc;</span>
<span style="color:#a0a0a0;font-style:italic">}</span>

<span style="color:#a0a0a0;font-style:italic">function MM_preloadImages() { //v3.0</span>
<span style="color:#a0a0a0;font-style:italic">  var d=document; if(d.images){ if(!d.MM_p) d.MM_p=new Array();</span>
<span style="color:#a0a0a0;font-style:italic">    var i,j=d.MM_p.length,a=MM_preloadImages.arguments; for(i=0; i&lt;a.length; i++)</span>
<span style="color:#a0a0a0;font-style:italic">    if (a[i].indexOf(&quot;#&quot;)!=0){ d.MM_p[j]=new Image; d.MM_p[j++].src=a[i];}}</span>
<span style="color:#a0a0a0;font-style:italic">}</span>

<span style="color:#a0a0a0;font-style:italic">function MM_findObj(n, d) { //v4.01</span>
<span style="color:#a0a0a0;font-style:italic">  var p,i,x;  if(!d) d=document; if((p=n.indexOf(&quot;?&quot;))&gt;0&amp;&amp;parent.frames.length) {</span>
<span style="color:#a0a0a0;font-style:italic">    d=parent.frames[n.substring(p+1)].document; n=n.substring(0,p);}</span>
<span style="color:#a0a0a0;font-style:italic">  if(!(x=d[n])&amp;&amp;d.all) x=d.all[n]; for (i=0;!x&amp;&amp;i&lt;d.forms.length;i++) x=d.forms[i][n];</span>
<span style="color:#a0a0a0;font-style:italic">  for(i=0;!x&amp;&amp;d.layers&amp;&amp;i&lt;d.layers.length;i++) x=MM_findObj(n,d.layers[i].document);</span>
<span style="color:#a0a0a0;font-style:italic">  if(!x &amp;&amp; d.getElementById) x=d.getElementById(n); return x;</span>
<span style="color:#a0a0a0;font-style:italic">}</span>

<span style="color:#a0a0a0;font-style:italic">function MM_swapImage() { //v3.0</span>
<span style="color:#a0a0a0;font-style:italic">  var i,j=0,x,a=MM_swapImage.arguments; document.MM_sr=new Array; for(i=0;i&lt;(a.length-2);i+=3)</span>
<span style="color:#a0a0a0;font-style:italic">   if ((x=MM_findObj(a[i]))!=null){document.MM_sr[j++]=x; if(!x.oSrc) x.oSrc=x.src; x.src=a[i+2];}</span></div>
</div>
<div class="a" style="left:264px;top:458px;width:773px;height:19px;border:1px solid #a5a5a5;border-radius:2px"></div>
<div class="t" style="left:273px;top:460px;color:#505050">Output</div>
<svg style="left:979px;top:467px" width="7" height="4" viewBox="0 0 7 4"><path d="M0 0H7L3.5 4Z" fill="#000"/></svg>
<svg style="left:992px;top:463px" width="9" height="9" viewBox="0 0 9 9"><path d="M2.5 0.5H6.5V5.5H2.5Z" fill="none" stroke="#000"/><path d="M1 5.5H8M4.5 5.5V8.5M5.5 0.5V5" stroke="#000"/></svg>
<div class="a" style="left:1007px;top:463px;width:9px;height:8px;border:1px solid #000;border-top-width:2px"></div>
<svg style="left:1021px;top:464px" width="8" height="8" viewBox="0 0 8 8"><path d="M0.5 0.5L7.5 7.5M7.5 0.5L0.5 7.5" stroke="#000" stroke-width="1.3"/></svg>
<svg style="left:272px;top:485px" width="16" height="16" viewBox="0 0 16 16"><rect x="1.5" y="2.5" width="8" height="12" fill="#cfcfcf" stroke="#a0a0a0"/><rect x="3.5" y="1" width="4" height="3" fill="#bbb"/><path d="M7.5 5.5H12.5L15.5 8.5V15.5H7.5Z" fill="#f8f8f8" stroke="#a0a0a0"/></svg>
<svg style="left:293px;top:485px" width="16" height="16" viewBox="0 0 16 16"><rect x="1.5" y="1.5" width="12" height="12" fill="#e4e4e4" stroke="#a0a0a0"/><circle cx="12.5" cy="12.5" r="3.3" fill="#e8e8e8" stroke="#8a8a8a"/><path d="M10.5 12.5H14.5" stroke="#555" stroke-width="1.2"/></svg>
<div class="a" style="left:314px;top:486px;width:1px;height:15px;background:#a9a9a9"></div>
<div class="a" style="left:317px;top:483px;width:21px;height:20px;background:#cce8ff;border:1px solid #0078d7"></div>
<svg style="left:320px;top:485px" width="16" height="16" viewBox="0 0 16 16"><circle cx="8" cy="5" r="4.3" fill="#f8b030" stroke="#e08010" stroke-width="0.8"/><circle cx="8" cy="5" r="2.3" fill="#ffd870"/><path d="M8 9V15.5" stroke="#e08a10" stroke-width="1.6"/></svg>
<svg style="left:341px;top:485px" width="16" height="16" viewBox="0 0 16 16"><path d="M1 2H12M1 6H9M1 10H12M1 14H9" stroke="#3a6ea5" stroke-width="1.3"/><path d="M14 3.5C14 6 12.5 7 10.5 7M14 11.5C14 14 12.5 15 10.5 15" fill="none" stroke="#2a8ae0" stroke-width="1.5"/><path d="M9.5 7L12 5V9ZM9.5 15L12 13V17Z" fill="#2a8ae0"/></svg>
<div class="a" style="left:362px;top:486px;width:1px;height:15px;background:#a9a9a9"></div>
<svg style="left:368px;top:485px" width="16" height="16" viewBox="0 0 16 16"><path d="M5 0.5H11L15.5 5V11L11 15.5H5L0.5 11V5Z" fill="#b8b8b8" stroke="#8a8a8a"/><path d="M5 5L11 11M11 5L5 11" stroke="#fff" stroke-width="2"/></svg>
<div class="a" style="left:269px;top:505px;width:764px;height:121px;border:1px solid #a0a0a0;background:#fff"></div>
<div class="a" style="left:1016px;top:506px;width:16px;height:119px;background:#f0f0f0"></div>
<div class="a" style="left:270px;top:609px;width:762px;height:16px;background:#f0f0f0"></div>
<svg style="left:1020px;top:512px" width="7" height="4" viewBox="0 0 7 4"><path d="M0.5 3.5L3.5 0.5L6.5 3.5" fill="none" stroke="#b0b0b0" stroke-width="1.6"/></svg>
<svg style="left:1020px;top:598px" width="7" height="4" viewBox="0 0 7 4"><path d="M0.5 0.5L3.5 3.5L6.5 0.5" fill="none" stroke="#b0b0b0" stroke-width="1.6"/></svg>
<svg style="left:276px;top:613px" width="4" height="7" viewBox="0 0 4 7"><path d="M3.5 0.5L0.5 3.5L3.5 6.5" fill="none" stroke="#b0b0b0" stroke-width="1.6"/></svg>
<svg style="left:1005px;top:613px" width="4" height="7" viewBox="0 0 4 7"><path d="M0.5 0.5L3.5 3.5L0.5 6.5" fill="none" stroke="#b0b0b0" stroke-width="1.6"/></svg>
<div class="a" style="left:342px;top:632px;width:695px;height:1px;background:#a0a0a0"></div>
<div class="a" style="left:266px;top:633px;width:771px;height:18px;background:#f7f7f7"></div>
<div class="a" style="left:265px;top:632px;width:1px;height:20px;background:#fafafa"></div>
<div class="a" style="left:266px;top:632px;width:76px;height:20px;background:#f0f0f0;border-right:1px solid #000;border-bottom:1px solid #000"></div>
<svg style="left:271px;top:635px" width="16" height="15" viewBox="0 0 16 15"><rect x="0.5" y="0.5" width="15" height="14" fill="#1a1a1a" stroke="#2a5aa0"/><path d="M2 8H5L6 5L8 11L9.5 4L11 8H14" fill="none" stroke="#30d030" stroke-width="1.2"/><path d="M5 9L7 5" stroke="#e03030" stroke-width="1"/></svg>
<div class="t" style="left:291px;top:635px;">Output</div>
<div class="a" style="left:347px;top:635px;width:0px;height:0px;"></div>
<svg style="left:348px;top:635px" width="16" height="15" viewBox="0 0 16 15"><rect x="0.5" y="0.5" width="15" height="13" fill="#e8f2fc" stroke="#3a80c8"/><rect x="1" y="1" width="14" height="2.5" fill="#3a80c8"/><rect x="5" y="8" width="4" height="7" rx="1" fill="#555"/><rect x="10" y="8" width="4" height="7" rx="1" fill="#555"/></svg>
<div class="t" style="left:368px;top:635px;color:#606060;letter-spacing:-0.35px">Find Results</div>
<div class="a" style="left:444px;top:636px;width:1px;height:15px;background:#b0b0b0"></div>
<svg style="left:451px;top:635px" width="16" height="16" viewBox="0 0 16 16"><path d="M1 11L9.5 2.5C10.5 1.5 12 1.5 13 2.5C14 3.5 14 5 13 6L4.5 14.5L4 12L1.5 12Z" fill="#e03838" stroke="#a01818" stroke-width="0.8"/></svg>
<div class="t" style="left:470px;top:635px;color:#606060">Bookmarks</div>
<div class="a" style="left:544px;top:636px;width:1px;height:15px;background:#b0b0b0"></div>
<div class="a" style="left:13px;top:655px;width:314px;height:18px;border:1px solid #a8a8a8"></div>
<div class="a" style="left:329px;top:655px;width:96px;height:18px;border:1px solid #a8a8a8"></div>
<div class="a" style="left:427px;top:655px;width:56px;height:18px;border:1px solid #a8a8a8"></div>
<div class="t" style="left:427px;top:657px;width:56px;text-align:center;color:#000">1250</div>
<div class="a" style="left:485px;top:655px;width:36px;height:18px;border:1px solid #a8a8a8"></div>
<div class="a" style="left:523px;top:655px;width:126px;height:18px;border:1px solid #a8a8a8"></div>
<div class="a" style="left:651px;top:655px;width:46px;height:18px;border:1px solid #a8a8a8"></div>
<div class="a" style="left:699px;top:655px;width:26px;height:18px;border:1px solid #a8a8a8"></div>
<div class="a" style="left:727px;top:655px;width:26px;height:18px;border:1px solid #a8a8a8"></div>
<div class="a" style="left:755px;top:655px;width:16px;height:18px;border:1px solid #a8a8a8"></div>
<div class="a" style="left:773px;top:655px;width:36px;height:18px;border:1px solid #a8a8a8"></div>
<div class="a" style="left:811px;top:655px;width:36px;height:18px;border:1px solid #a8a8a8"></div>
<div class="a" style="left:849px;top:655px;width:36px;height:18px;border:1px solid #a8a8a8"></div>
<div class="t" style="left:849px;top:657px;width:36px;text-align:center;color:#6d6d6d">CAP</div>
<div class="a" style="left:887px;top:655px;width:35px;height:18px;border:1px solid #a8a8a8"></div>
<div class="t" style="left:887px;top:657px;width:35px;text-align:center;color:#000">NUM</div>
<div class="a" style="left:925px;top:655px;width:36px;height:18px;border:1px solid #a8a8a8"></div>
<div class="t" style="left:925px;top:657px;width:36px;text-align:center;color:#6d6d6d">OVR</div>
<div class="a" style="left:963px;top:655px;width:58px;height:18px;border:1px solid #a8a8a8"></div>
<div class="t" style="left:963px;top:657px;width:58px;text-align:center;color:#6d6d6d">SCRL</div>
<svg style="left:1028px;top:663px" width="10" height="10" viewBox="0 0 10 10"><rect x="8" y="0" width="2" height="2" fill="#8a8a8a"/><rect x="4" y="4" width="2" height="2" fill="#8a8a8a"/><rect x="8" y="4" width="2" height="2" fill="#8a8a8a"/><rect x="0" y="8" width="2" height="2" fill="#8a8a8a"/><rect x="4" y="8" width="2" height="2" fill="#8a8a8a"/><rect x="8" y="8" width="2" height="2" fill="#8a8a8a"/></svg>
<div class="a" style="left:12px;top:42px;width:1px;height:632px;background:#fff"></div>
<div class="a" style="left:1039px;top:42px;width:1px;height:632px;background:#fff"></div>
<div class="a" style="left:12px;top:673px;width:1028px;height:1px;background:#fff"></div>
</body></html>
